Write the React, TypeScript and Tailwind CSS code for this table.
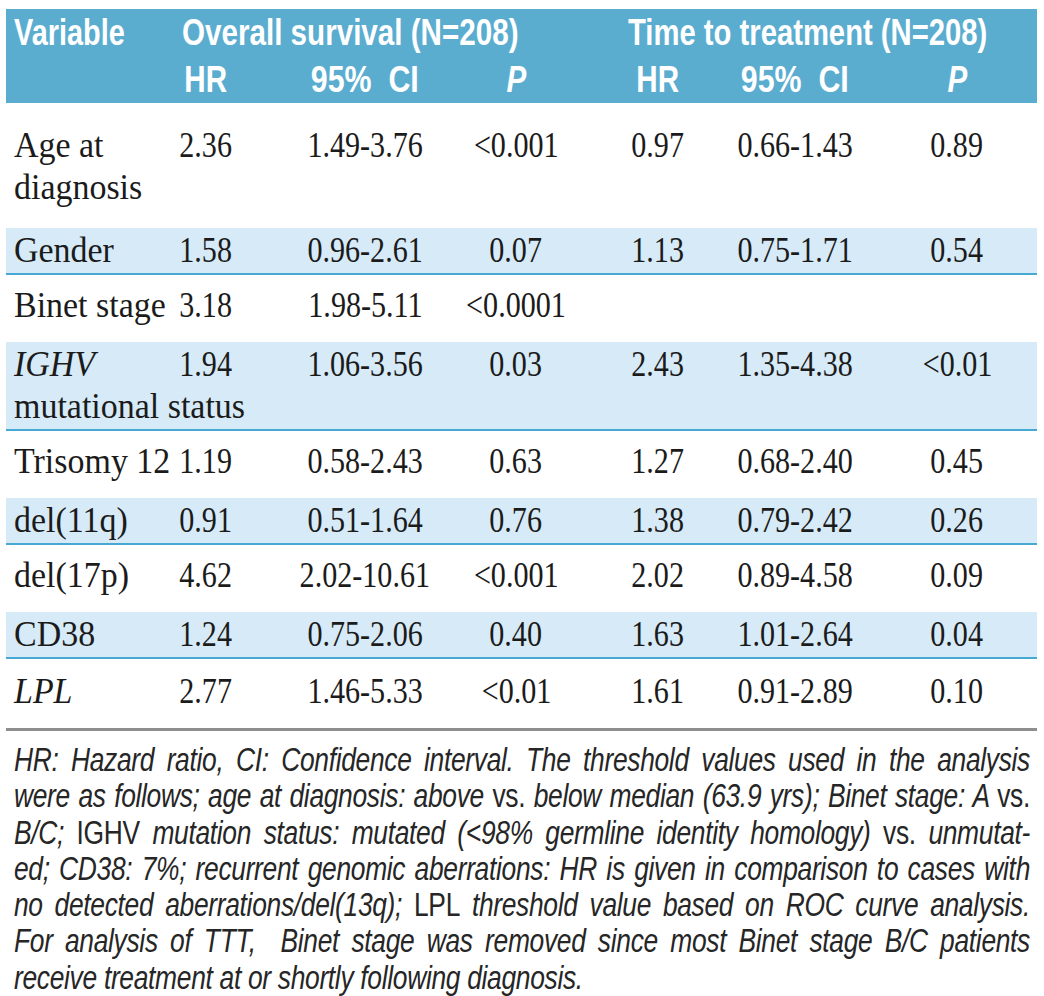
import React from "react";

const GRID = "grid grid-cols-[94px_212px_106px_196px_88px_186px_138px]";
const SERIF = "font-['Liberation_Serif','Times_New_Roman',serif]";
const HEAD = "font-['Liberation_Sans','Arial',sans-serif]";
const NOTE = "font-['Liberation_Sans','Arial',sans-serif]";

function C({ children, className = "" }: { children?: React.ReactNode; className?: string }) {
  return (
    <div className="flex justify-center">
      <span className={"shrink-0 whitespace-nowrap origin-center " + className}>{children}</span>
    </div>
  );
}

type Row = {
  v: React.ReactNode[];
  cells: string[];
  blue: boolean;
  pad?: string;
};

const rows: Row[] = [
  { v: ["Age at", "diagnosis"], cells: ["2.36", "1.49-3.76", "<0.001", "0.97", "0.66-1.43", "0.89"], blue: false, pad: "pt-[22px] pb-[19px]" },
  { v: ["Gender"], cells: ["1.58", "0.96-2.61", "0.07", "1.13", "0.75-1.71", "0.54"], blue: true },
  { v: ["Binet stage"], cells: ["3.18", "1.98-5.11", "<0.0001", "", "", ""], blue: false },
  { v: [<i key="i">IGHV</i>, "mutational status"], cells: ["1.94", "1.06-3.56", "0.03", "2.43", "1.35-4.38", "<0.01"], blue: true },
  { v: ["Trisomy 12"], cells: ["1.19", "0.58-2.43", "0.63", "1.27", "0.68-2.40", "0.45"], blue: false },
  { v: ["del(11q)"], cells: ["0.91", "0.51-1.64", "0.76", "1.38", "0.79-2.42", "0.26"], blue: true },
  { v: ["del(17p)"], cells: ["4.62", "2.02-10.61", "<0.001", "2.02", "0.89-4.58", "0.09"], blue: false },
  { v: ["CD38"], cells: ["1.24", "0.75-2.06", "0.40", "1.63", "1.01-2.64", "0.04"], blue: true },
  { v: [<i key="l">LPL</i>], cells: ["2.77", "1.46-5.33", "<0.01", "1.61", "0.91-2.89", "0.10"], blue: false, pad: "pt-[12px] pb-[15px]" },
];

function U({ children }: { children: React.ReactNode }) {
  return <span className="not-italic">{children}</span>;
}

const NL = "w-[1270px] scale-x-[0.8] origin-left whitespace-nowrap";
const NJ = NL + " text-justify [text-align-last:justify]";

export default function App() {
  return (
    <div className="bg-white w-[1044px] h-[996px] overflow-hidden text-[#1b1b1b]">
      <div className="pt-[9px] pl-[6px] w-[1037px]">
        {/* Header */}
        <div className={"bg-[#5badd0] text-white font-bold text-[37px] leading-[47px] h-[94px] " + HEAD}>
          <div className="flex pl-[8px] whitespace-nowrap">
            <div className="w-[168px] shrink-0 scale-x-[0.78] origin-left">Variable</div>
            <div className="w-[446px] shrink-0 scale-x-[0.8] origin-left">Overall survival (N=208)</div>
            <div className="w-[400px] shrink-0 scale-x-[0.79] origin-left">Time to treatment (N=208)</div>
          </div>
          <div className={GRID}>
            <div />
            <C className="scale-x-[0.8]">HR</C>
            <C className="scale-x-[0.82]">95%&nbsp; CI</C>
            <C className="italic scale-x-[0.8]">P</C>
            <C className="scale-x-[0.8]">HR</C>
            <C className="scale-x-[0.82]">95%&nbsp; CI</C>
            <C className="italic scale-x-[0.8]">P</C>
          </div>
        </div>

        {/* Body */}
        <div className={"text-[35px] leading-[42px] " + SERIF}>
          {rows.map((r, idx) => (
            <div
              key={idx}
              className={
                GRID +
                " " +
                (r.blue
                  ? "bg-[#d6eaf7] border-b-2 border-[#47a9d3] pt-[2px] pb-[1px]"
                  : r.pad ?? "pt-[10px] pb-[15px]")
              }
            >
              <div className="pl-[8px] whitespace-nowrap">
                {r.v.map((line, i) => (
                  <div key={i} className="w-[200px] scale-x-[0.97] origin-left">{line}</div>
                ))}
              </div>
              {r.cells.map((c, i) => (
                <C key={i} className="scale-x-[0.86]">{c}</C>
              ))}
            </div>
          ))}
        </div>
        <div className="h-[3px] bg-[#8e8e8e]" />

        {/* Footnote */}
        <div className={"pt-[11px] pl-[8px] italic text-[33px] leading-[36.3px] tracking-[-0.4px] text-[#262626] " + NOTE}>
          <div className={NJ}>
            HR: Hazard ratio, CI: Confidence interval. The threshold values used in the analysis
          </div>
          <div className={NJ}>
            were as follows; age at diagnosis: above <U>vs.</U> below median (63.9 yrs); Binet stage: A <U>vs.</U>
          </div>
          <div className={NJ}>
            B/C; <U>IGHV</U> mutation status: mutated (&lt;98% germline identity homology) <U>vs.</U> unmutat-
          </div>
          <div className={NJ}>
            ed; CD38: 7%; recurrent genomic aberrations: HR is given in comparison to cases with
          </div>
          <div className={NJ}>
            no detected aberrations/del(13q); <U>LPL</U> threshold value based on ROC curve analysis.
          </div>
          <div className={NJ}>
            For analysis of TTT,&nbsp; Binet stage was removed since most Binet stage B/C patients
          </div>
          <div className={NL}>receive treatment at or shortly following diagnosis.</div>
        </div>
      </div>
    </div>
  );
}
